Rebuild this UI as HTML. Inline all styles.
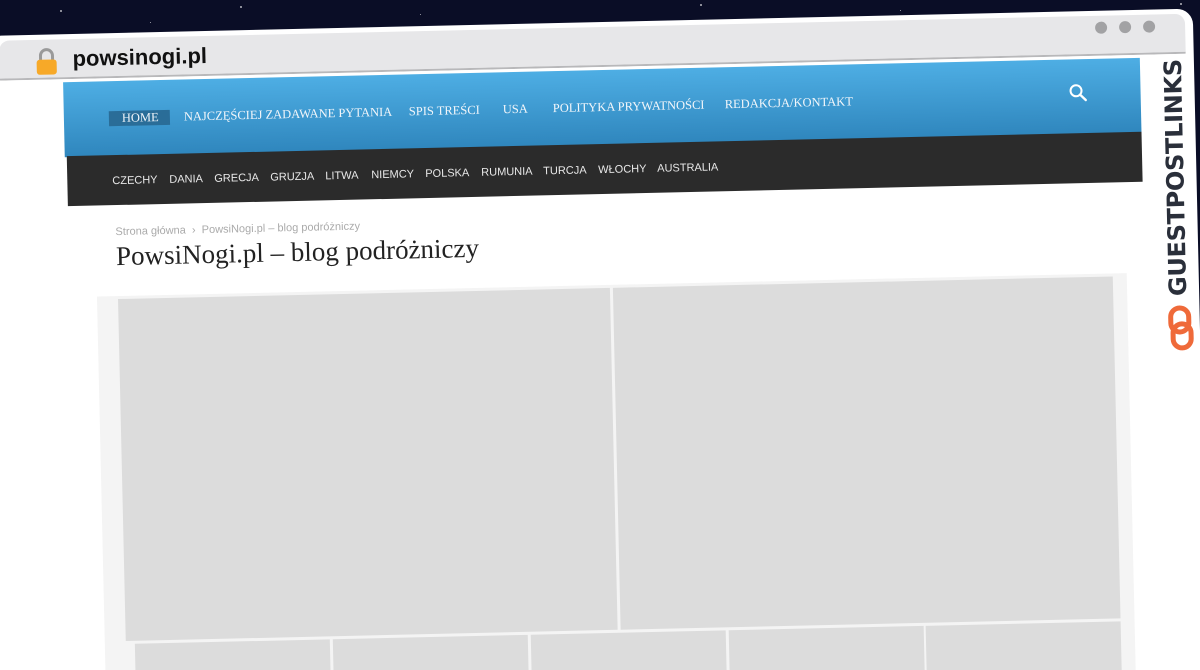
<!DOCTYPE html>
<html style="width:1200px;height:670px;overflow:hidden"><head><meta charset="utf-8"><style>
*{margin:0;padding:0;box-sizing:border-box}
body{width:1200px;height:670px;overflow:hidden;background:#0a0d26;position:relative;font-family:"Liberation Sans",sans-serif}
#clip{position:absolute;left:0;top:0;width:1200px;height:670px;overflow:hidden}
.star{position:absolute;background:#fff;border-radius:50%;opacity:.7}
#w{position:absolute;left:0;top:0;width:1200px;height:670px;transform:translate(6px,2px) rotate(-1.3deg);transform-origin:600px 335px}
.a{position:absolute}
.nav{position:absolute;top:98px;font-family:"Liberation Serif",serif;font-size:12.5px;color:#f2f6fa;white-space:nowrap}
.sub{position:absolute;top:162px;font-size:11px;color:#e8e8e8;white-space:nowrap}
.img{position:absolute;background:#dcdcdc}
</style></head><body>
<div id="clip">
<div class="star" style="left:60px;top:10px;width:2px;height:2px"></div>
<div class="star" style="left:240px;top:6px;width:2px;height:2px"></div>
<div class="star" style="left:420px;top:14px;width:1px;height:1px"></div>
<div class="star" style="left:700px;top:4px;width:2px;height:2px"></div>
<div class="star" style="left:900px;top:10px;width:1px;height:1px"></div>
<div class="star" style="left:1180px;top:3px;width:2px;height:2px"></div>
<div class="star" style="left:150px;top:22px;width:1px;height:1px"></div>
<div id="w">
 <div class="a" style="left:-14px;top:20px;width:1208px;height:680px;background:#fff;border-radius:16px"></div>
 <div class="a" style="left:0px;top:25px;width:1186px;height:40px;background:#e7e7e9;border-bottom:2px solid #b8b8ba;border-radius:10px 10px 0 0"></div>
 <svg class="a" style="left:35px;top:33px" width="24" height="28" viewBox="0 0 24 28"><path d="M6 13V8a6 6 0 0 1 12 0v5" fill="none" stroke="#9a9a9a" stroke-width="3"/><rect x="2" y="12" width="20" height="15" rx="3" fill="#f7a928"/></svg>
 <div class="a" style="left:73px;top:32px;font-size:22px;font-weight:bold;color:#111;font-family:'Liberation Sans',sans-serif">powsinogi.pl</div>
 <div class="a" style="left:1096px;top:31px;width:12px;height:12px;border-radius:50%;background:#a2a2a4"></div>
 <div class="a" style="left:1120px;top:31px;width:12px;height:12px;border-radius:50%;background:#a2a2a4"></div>
 <div class="a" style="left:1144px;top:31px;width:12px;height:12px;border-radius:50%;background:#a2a2a4"></div>

 <div class="a" style="left:63px;top:68px;width:1077px;height:75px;background:linear-gradient(#4eaee4,#2f86bd)"></div>
 <div class="a" style="left:108px;top:98px;width:61px;height:15px;background:#2a6d98"></div>
 <div class="nav" style="left:121px">HOME</div>
 <div class="nav" style="left:183px">NAJCZĘŚCIEJ ZADAWANE PYTANIA</div>
 <div class="nav" style="left:408px">SPIS TREŚCI</div>
 <div class="nav" style="left:502px">USA</div>
 <div class="nav" style="left:552px">POLITYKA PRYWATNOŚCI</div>
 <div class="nav" style="left:724px">REDAKCJA/KONTAKT</div>
 <svg class="a" style="left:1068px;top:92px" width="20" height="20" viewBox="0 0 20 20"><circle cx="7.5" cy="7.5" r="5.5" fill="none" stroke="#fff" stroke-width="2"/><path d="M11.5 11.5L17 17" stroke="#fff" stroke-width="2.4" stroke-linecap="round"/></svg>
 <div class="a" style="left:65px;top:142px;width:1075px;height:50px;background:#2b2b2b"></div>
 <div class="sub" style="left:110px">CZECHY</div>
 <div class="sub" style="left:167px">DANIA</div>
 <div class="sub" style="left:212px">GRECJA</div>
 <div class="sub" style="left:268px">GRUZJA</div>
 <div class="sub" style="left:323px">LITWA</div>
 <div class="sub" style="left:369px">NIEMCY</div>
 <div class="sub" style="left:423px">POLSKA</div>
 <div class="sub" style="left:479px">RUMUNIA</div>
 <div class="sub" style="left:541px">TURCJA</div>
 <div class="sub" style="left:596px">WŁOCHY</div>
 <div class="sub" style="left:655px">AUSTRALIA</div>

 <div class="a" style="left:112px;top:213px;font-size:11px;color:#aaa;white-space:nowrap">Strona główna &nbsp;›&nbsp; PowsiNogi.pl – blog podróżniczy</div>
 <div class="a" style="left:112px;top:228px;font-family:'Liberation Serif',serif;font-size:27px;color:#222;white-space:nowrap">PowsiNogi.pl – blog podróżniczy</div>

 <div class="a" style="left:92px;top:283px;width:1030px;height:400px;background:#f4f4f4"></div>
 <div class="img" style="left:113px;top:286px;width:492px;height:342px"></div>
 <div class="img" style="left:608px;top:286px;width:500px;height:342px"></div>
 <div class="img" style="left:122px;top:631px;width:195px;height:50px"></div>
 <div class="img" style="left:320px;top:631px;width:195px;height:50px"></div>
 <div class="img" style="left:518px;top:631px;width:195px;height:50px"></div>
 <div class="img" style="left:716px;top:631px;width:195px;height:50px"></div>
 <div class="img" style="left:913px;top:631px;width:195px;height:50px"></div>

 <div class="a" style="left:1157px;top:307px;width:240px;transform:rotate(-90deg);transform-origin:0 0;font-family:'DejaVu Sans',sans-serif;font-weight:bold;font-size:24px;color:#2a2f3a;letter-spacing:-0.3px;white-space:nowrap;line-height:32px">GUESTPOSTLINKS</div>
 <svg class="a" style="left:1161px;top:316px" width="28" height="46" viewBox="0 0 28 46"><rect x="4" y="3" width="18" height="24" rx="9" fill="none" stroke="#ef6a3a" stroke-width="5"/><rect x="6" y="19" width="18" height="24" rx="9" fill="none" stroke="#ef6a3a" stroke-width="5"/></svg>
</div>
</div>
</body></html>
